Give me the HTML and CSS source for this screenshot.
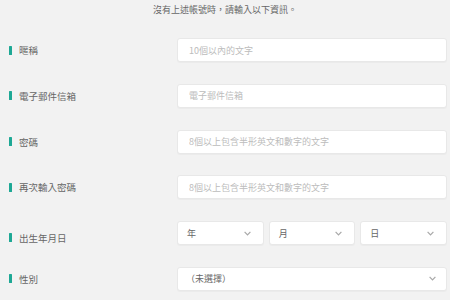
FILE: index.html
```html
<!DOCTYPE html>
<html lang="zh-Hant">
<head>
<meta charset="utf-8">
<title>註冊</title>
<link rel="stylesheet" href="styles.css">
</head>
<body>
<div class="page">
  <p class="intro">沒有上述帳號時，請輸入以下資訊。</p>
  <div class="form">
    <div class="row">
      <div class="label"><span class="bar"></span>暱稱</div>
      <div class="field"><input class="input" type="text" placeholder="10個以內的文字"></div>
    </div>
    <div class="row">
      <div class="label"><span class="bar"></span>電子郵件信箱</div>
      <div class="field"><input class="input" type="text" placeholder="電子郵件信箱"></div>
    </div>
    <div class="row">
      <div class="label"><span class="bar"></span>密碼</div>
      <div class="field"><input class="input" type="password" placeholder="8個以上包含半形英文和數字的文字"></div>
    </div>
    <div class="row">
      <div class="label"><span class="bar"></span>再次輸入密碼</div>
      <div class="field"><input class="input" type="password" placeholder="8個以上包含半形英文和數字的文字"></div>
    </div>
    <div class="row">
      <div class="label label-low"><span class="bar"></span>出生年月日</div>
      <div class="field field-split">
        <div class="select"><span>年</span><svg class="chev" width="7" height="5" viewBox="0 0 7 5"><polyline points="0.6,0.8 3.5,3.8 6.4,0.8" fill="none" stroke="#a8a8a8" stroke-width="1.2"/></svg></div>
        <div class="select"><span>月</span><svg class="chev" width="7" height="5" viewBox="0 0 7 5"><polyline points="0.6,0.8 3.5,3.8 6.4,0.8" fill="none" stroke="#a8a8a8" stroke-width="1.2"/></svg></div>
        <div class="select"><span>日</span><svg class="chev" width="7" height="5" viewBox="0 0 7 5"><polyline points="0.6,0.8 3.5,3.8 6.4,0.8" fill="none" stroke="#a8a8a8" stroke-width="1.2"/></svg></div>
      </div>
    </div>
    <div class="row">
      <div class="label"><span class="bar"></span>性別</div>
      <div class="field">
        <div class="select select-wide"><span>（未選擇）</span><svg class="chev" width="7" height="5" viewBox="0 0 7 5"><polyline points="0.6,0.8 3.5,3.8 6.4,0.8" fill="none" stroke="#a8a8a8" stroke-width="1.2"/></svg></div>
      </div>
    </div>
  </div>
</div>
</body>
</html>
```
FILE: styles.css
```css
html, body {
  margin: 0;
  padding: 0;
  background: #f2f2f2;
}
body {
  font-family: "Noto Sans CJK TC", "Noto Sans", sans-serif;
  color: #666;
}
.page {
  width: 450px;
  height: 300px;
  overflow: hidden;
}
.intro {
  margin: 0;
  height: 20px;
  line-height: 20px;
  font-size: 9px;
  text-align: center;
  color: #666;
}
.form {
  margin-top: 18px;
  display: flex;
  flex-direction: column;
  gap: 21.8px;
}
.row {
  display: flex;
  height: 24px;
}
.label {
  width: 168px;
  padding-left: 9px;
  display: flex;
  align-items: center;
  gap: 7px;
  font-size: 9.5px;
  color: #666;
}
.label-low {
  padding-top: 9px;
}
.bar {
  width: 3px;
  height: 9px;
  background: #1ea895;
  border-radius: 0.5px;
}
.field {
  width: 270px;
  display: flex;
}
.field-split {
  gap: 5px;
}
.input {
  width: 100%;
  height: 24px;
  box-sizing: border-box;
  border: 1px solid #e8e8e8;
  border-radius: 3px;
  background: #fff;
  padding: 0 11px;
  font-family: inherit;
  font-size: 9px;
  color: #666;
  outline: none;
  box-shadow: 0 1px 1px rgba(0,0,0,0.03);
}
.input::placeholder {
  color: #bcbcbc;
}
.select {
  flex: 1;
  height: 24px;
  box-sizing: border-box;
  border: 1px solid #e8e8e8;
  border-radius: 3px;
  background: #fff;
  display: flex;
  align-items: center;
  justify-content: space-between;
  padding: 0 12px 0 9px;
  font-size: 9px;
  color: #666;
  box-shadow: 0 1px 1px rgba(0,0,0,0.03);
}
.select-wide {
  padding: 0 10px 0 8px;
}
.chev {
  display: block;
}
```
